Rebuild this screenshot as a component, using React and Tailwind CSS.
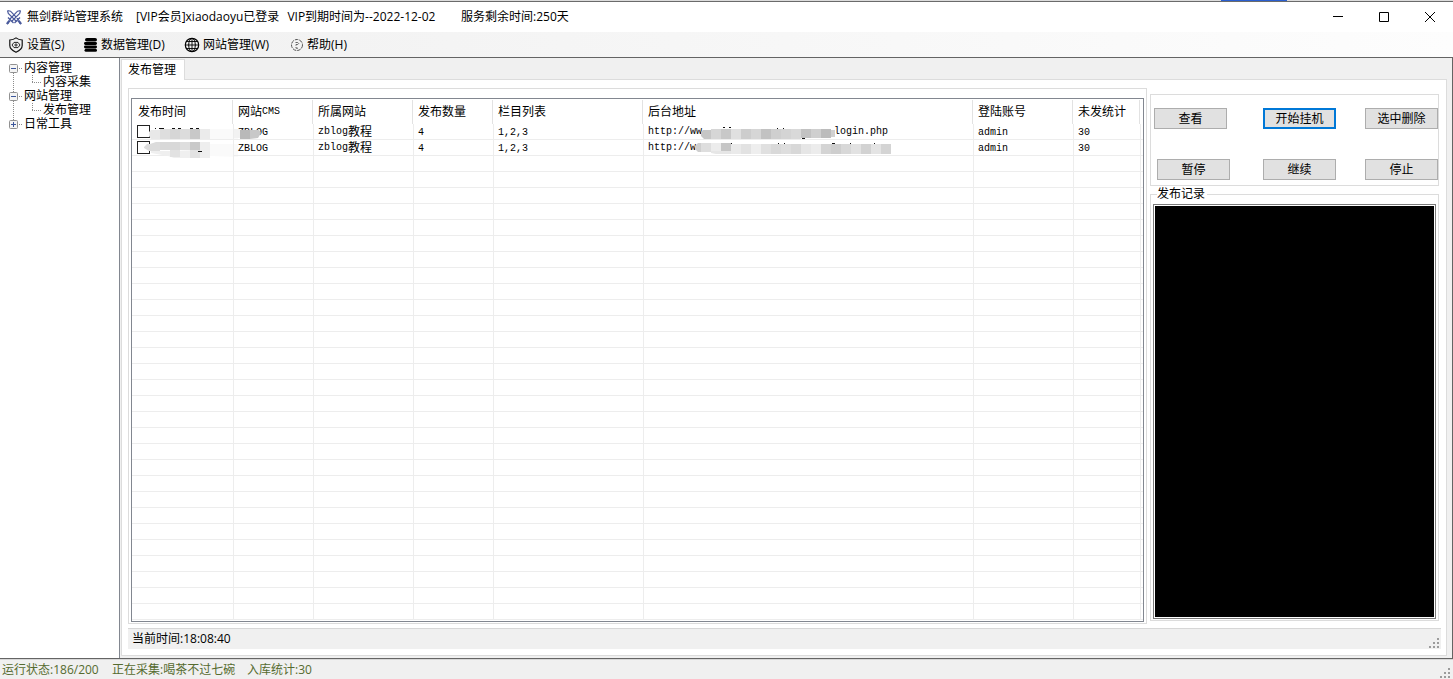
import React from 'react';

const COLUMNS = [
  { label: ['发布时间'], width: 'w-[101px]' },
  { label: ['网站', 'CMS'], width: 'w-[80px]' },
  { label: ['所属网站'], width: 'w-[100px]' },
  { label: ['发布数量'], width: 'w-[80px]' },
  { label: ['栏目列表'], width: 'w-[150px]' },
  { label: ['后台地址'], width: 'w-[330px]' },
  { label: ['登陆账号'], width: 'w-[100px]' },
  { label: ['未发统计'], width: 'w-[67px]' },
];

const EMPTY_ROWS = Array.from({ length: 29 }, (_, i) => i);

function Mono({ children }) {
  return (
    <span className="font-['Liberation_Mono','Noto_Sans_CJK_SC',monospace] text-[10px] leading-none">
      {children}
    </span>
  );
}

function Blocks({ x = 0, y, w, h, colors }) {
  return colors.map((c, i) => <rect key={i} x={x + i * w} y={y} width={w} height={h} fill={c} />);
}

function Marks({ points }) {
  return points.map(([x, y, w], i) => <rect key={i} x={x} y={y} width={w} height="1" fill="#111" />);
}

function TimeMaskA() {
  return (
    <svg className="absolute top-0 left-4 h-4 w-28" viewBox="0 0 112 16" aria-hidden="true">
      <Marks points={[[7, 4, 1], [11, 4, 5], [24, 4, 3], [30, 4, 3], [42, 4, 3], [48, 4, 3]]} />
      <path d="M1 8l2-2h9v9H3l-2-3z" fill="#e8e8e8" />
      <Blocks x={12} y={5} w={10} h={10} colors={['#dedede', '#d6d6d6', '#dcdcdc', '#c8c8c8', '#ebebeb']} />
      <rect x="62" y="5" width="28" height="10" fill="#fafafa" />
    </svg>
  );
}

function TimeMaskB() {
  return (
    <svg className="absolute top-0 left-3 h-5 w-28" viewBox="0 0 112 20" aria-hidden="true">
      <path d="M0 7l3-3h3l6-2h4v9H5l-5-3z" fill="#dcdcdc" />
      <Blocks x={16} y={2} w={10} h={8} colors={['#d8d8d8', '#d8d8d8', '#dedede', '#c9c9c9', '#eeeeee']} />
      <path d="M7 11h19l30-1h10v8H30l-6-2-17-3z" fill="#efefef" />
      <path d="M26 10h10v7H26zM46 10h10v8H46z" fill="#e2e2e2" />
      <path d="M66 4h28v13l-28-1z" fill="#fafafa" />
      <Marks points={[[54, 11, 4]]} />
    </svg>
  );
}

function CmsMask() {
  return (
    <svg className="absolute top-0 left-0 h-4 w-8" viewBox="0 0 32 16" aria-hidden="true">
      <rect x="0" y="5" width="6" height="9" fill="#f2f2f2" />
      <rect x="6" y="6" width="10" height="9" fill="#b9b9b9" />
      <path d="M16 6h9l2 3-3 5-8 1z" fill="#c8c8c8" />
    </svg>
  );
}

function UrlMaskA() {
  return (
    <svg className="absolute top-0 left-14 h-4 w-[136px]" viewBox="0 0 136 16" aria-hidden="true">
      <Marks points={[[23, 3, 2], [29, 3, 2], [77, 4, 1], [83, 4, 1]]} />
      <path d="M1 8l2-2h8v9H4l-3-3z" fill="#c6c6c6" />
      <Blocks x={11} y={5} w={10} h={10} colors={['#d6d6d6', '#c8c8c8', '#e0e0e0', '#cdcdcd', '#d6d6d6', '#c2c2c2', '#cfcfcf', '#d4d4d4', '#d9d9d9']} />
      <Blocks x={101} y={5} w={10} h={9} colors={['#c2c2c2', '#cfcfcf', '#bcbcbc']} />
      <path d="M131 6h4v7h-4z" fill="#d0d0d0" />
      <Marks points={[[102, 14, 3]]} />
    </svg>
  );
}

function UrlMaskB() {
  return (
    <svg className="absolute top-0 left-12 h-4 w-[200px]" viewBox="0 0 200 16" aria-hidden="true">
      <Marks points={[[32, 3, 2], [38, 3, 2], [86, 3, 1], [92, 3, 1], [140, 3, 3], [158, 3, 1], [182, 3, 1]]} />
      <path d="M3 6l3-3h4v9H6L3 9z" fill="#cfcfcf" />
      <Blocks x={9} y={3} w={10} h={9} colors={['#dedede', '#ececec', '#c6c6c6']} />
      <Blocks x={39} y={4} w={10} h={10} colors={['#eaeaea', '#e2e2e2', '#eeeeee', '#e0e0e0', '#d9d9d9', '#dedede', '#d8d8d8', '#e6e6e6', '#ececec', '#d4d4d4', '#cecece', '#d8d8d8', '#e2e2e2', '#d2d2d2', '#e4e4e4']} />
      <path d="M19 11h20v3H24l-5-1z" fill="#e6e6e6" />
      <rect x="189" y="4" width="10" height="10" fill="#d4d4d4" />
    </svg>
  );
}

const ROWS = [
  { name: '第一条', cms: 'ZBLOG', url: ['http://ww', 'login.php'], TimeMask: TimeMaskA, CmsCover: CmsMask, UrlMask: UrlMaskA },
  { name: '第二条', cms: 'ZBLOG', url: ['http://w'], TimeMask: TimeMaskB, UrlMask: UrlMaskB },
];

const CELL = 'relative h-4 border-b border-b-[#ededed] p-0 pl-1 align-middle leading-none whitespace-nowrap border-l border-l-[#ededed]';

function TaskTable() {
  return (
    <table className="w-full table-fixed border-separate border-spacing-0 text-xs">
      <thead>
        <tr>
          {COLUMNS.map((c, i) => (
            <th key={c.label[0]} scope="col" className={`${c.width} h-[25px] p-0 pt-px text-left font-normal`}>
              <div className={`flex h-6 items-center border-r border-[#e2e2e2] leading-none ${i ? 'pl-[5px]' : 'pl-[6px]'}`}>
                {c.label[0]}
                {c.label[1] && <Mono>{c.label[1]}</Mono>}
              </div>
            </th>
          ))}
          <td className="p-0" />
        </tr>
      </thead>
      <tbody>
        {ROWS.map(({ name, cms, url, TimeMask, CmsCover, UrlMask }) => (
          <tr key={name}>
            <td className="relative h-4 border-b border-[#ededed] p-0 pl-[5px] align-middle">
              <input
                type="checkbox"
                aria-label={name}
                className="block size-[13px] appearance-none border border-[#222] bg-white checked:bg-[#222]"
              />
              <TimeMask />
            </td>
            <td className={CELL}>
              <Mono>{cms}</Mono>
              {CmsCover && <CmsCover />}
            </td>
            <td className={CELL}>
              <div className="flex h-[15px] items-center">
                <Mono>zblog</Mono>教程
              </div>
            </td>
            <td className={CELL}><Mono>4</Mono></td>
            <td className={CELL}><Mono>1,2,3</Mono></td>
            <td className={CELL}>
              <div className="flex h-[15px] w-60 items-center justify-between">
                {url.map((part) => <Mono key={part}>{part}</Mono>)}
              </div>
              <UrlMask />
            </td>
            <td className={CELL}><Mono>admin</Mono></td>
            <td className={CELL}><Mono>30</Mono></td>
            <td className={CELL} />
          </tr>
        ))}
        {EMPTY_ROWS.map((r) => (
          <tr key={r}>
            <td className="h-4 border-b border-[#ededed] p-0" />
            {COLUMNS.map((c) => <td key={c.label[0]} className={CELL} />)}
          </tr>
        ))}
      </tbody>
    </table>
  );
}

function Grip() {
  return (
    <svg className="size-[11px] shrink-0" viewBox="0 0 11 11" aria-hidden="true">
      {[[8, 0], [4, 4], [8, 4], [0, 8], [4, 8], [8, 8]].map(([x, y]) => (
        <rect key={`${x}-${y}`} x={x} y={y} width="2" height="2" fill="#9c9c9c" />
      ))}
    </svg>
  );
}

function SwordsIcon() {
  return (
    <svg className="size-4" viewBox="0 0 16 16" fill="none" stroke="#4a5a9c" aria-hidden="true">
      <path d="M1.5 1.5l3 .7 8 8.3M1.5 1.5l.8 3 8.2 8M14.5 1.5l-3 .7-8 8.3M14.5 1.5l-.8 3-8.2 8" strokeWidth="1.2" />
      <path d="M2 8.5L7.5 14M14 8.5L8.5 14" strokeWidth="1.3" />
      <path d="M3.8 11.5L1.5 14M12.2 11.5l2.3 2.5" strokeWidth="2.2" />
      <circle cx="1.5" cy="14.3" r=".8" fill="#4a5a9c" />
      <circle cx="14.5" cy="14.3" r=".8" fill="#4a5a9c" />
    </svg>
  );
}

function ShieldIcon() {
  return (
    <svg className="size-4" viewBox="0 0 16 16" fill="none" stroke="#111" aria-hidden="true">
      <path d="M8 .9C6.2 2.3 4 2.9 1.8 3v5.5c0 3 2.7 5.2 6.2 6.8 3.5-1.6 6.2-3.8 6.2-6.8V3C12 2.9 9.8 2.300 8 .9z" strokeWidth="1.2" />
      <path d="M4 8l2-2.6h4L12 8l-2 2.6H6z" strokeWidth=".9" />
      <circle cx="8" cy="8" r="1.1" strokeWidth=".9" />
    </svg>
  );
}

function DatabaseIcon() {
  return (
    <svg className="h-4 w-[15px]" viewBox="0 0 15 16" aria-hidden="true">
      <rect x="2" y="1" width="12" height="3.6" rx="1.8" fill="#000" />
      <rect x="1" y="5" width="13" height="3" rx="1.4" fill="#000" />
      <rect x="1" y="8.4" width="13" height="3" rx="1.4" fill="#000" />
      <rect x="1.500" y="11.800" width="12.500" height="3" rx="1.500" fill="#000" />
    </svg>
  );
}

function GlobeIcon() {
  return (
    <svg className="size-4" viewBox="0 0 16 16" fill="none" stroke="#000" aria-hidden="true">
      <circle cx="8" cy="8" r="6.7" strokeWidth="1.2" />
      <ellipse cx="8" cy="8" rx="3.3" ry="6.7" />
      <path d="M8 1v14M1 8h14M2.5 4.5h11M2.5 11.5h11" strokeWidth=".9" />
    </svg>
  );
}

function HelpIcon() {
  return (
    <svg className="size-[14px]" viewBox="0 0 14 14" fill="none" stroke="#555" aria-hidden="true">
      <circle cx="7" cy="7" r="5.5" strokeDasharray="3.6 1" />
      <path d="M5.5 4.5h2.2l1 1-1 1H6v1.200M6 9v1.200h2" strokeWidth=".9" />
    </svg>
  );
}

const MENU = [
  { label: '设置(S)', Icon: ShieldIcon, cls: 'w-[75px]' },
  { label: '数据管理(D)', Icon: DatabaseIcon, cls: 'w-[101px]' },
  { label: '网站管理(W)', Icon: GlobeIcon, cls: 'w-[106px]' },
  { label: '帮助(H)', Icon: HelpIcon, cls: 'w-[70px]' },
];

const DOTS = { stroke: '#8c8c8c', strokeDasharray: '1 1' };

function TreeParent({ label, open, first, last }) {
  return (
    <button type="button" aria-expanded={open} className="flex h-[14px] items-center text-left leading-none">
      <svg className="h-[14px] w-6" viewBox="0 0 24 14" aria-hidden="true">
        {!first && <path d="M13.5 0v3" {...DOTS} />}
        {!last && <path d="M13.5 12v2" {...DOTS} />}
        <rect x="9.5" y="3.5" width="8" height="8" rx="1" fill="#f4f4f4" stroke="#919191" />
        <path d={open ? 'M11 7.5h5' : 'M11 7.5h5M13.5 5v5'} stroke="#3b569b" />
        <path d="M19 7.5h3" {...DOTS} />
      </svg>
      {label}
    </button>
  );
}

function TreeChild({ label }) {
  return (
    <li>
      <a href="#item" className="flex h-[14px] items-center leading-none">
        <svg className="h-[14px] w-[43px]" viewBox="0 0 43 14" fill="none" aria-hidden="true">
          <path d="M13.5 0v14" {...DOTS} />
          <path d="M32.5 0v7M32 7.5h9" {...DOTS} />
        </svg>
        {label}
      </a>
    </li>
  );
}

function PushButton({ children, className = '' }) {
  return (
    <button type="button" className={`h-[21px] w-[73px] border bg-[#e1e1e1] leading-none ${className || 'border-[#adadad]'}`}>
      {children}
    </button>
  );
}

export default function App() {
  return (
    <div className="flex min-h-screen flex-col bg-[#f0f0f0] font-['Liberation_Sans','Noto_Sans_CJK_SC',sans-serif] text-xs text-black">
      <div className="flex h-[2px] justify-end border-b border-[#6b6b6b] bg-[#dcdcdc] pr-[166px]">
        <div className="w-[66px] bg-[#2a5fd0]" />
      </div>

      <header className="flex h-[30px] items-center bg-white pl-[6px] font-['Open_Sans','Noto_Sans_CJK_SC',sans-serif]">
        <SwordsIcon />
        <h1 className="w-[114px] pl-[5px] whitespace-nowrap">無剑群站管理系统</h1>
        <p className="flex w-[325px] gap-2 whitespace-nowrap">
          <span>[VIP会员]xiaodaoyu已登录</span>
          <span>VIP到期时间为--2022-12-02</span>
        </p>
        <p className="whitespace-nowrap">服务剩余时间:250天</p>
        <div className="ml-auto flex">
          <button type="button" aria-label="最小化" className="flex h-[30px] w-[46px] items-center justify-center">
            <svg className="size-[10px]" viewBox="0 0 10 10" stroke="#000"><path d="M0 4.5h10" /></svg>
          </button>
          <button type="button" aria-label="最大化" className="flex h-[30px] w-[46px] items-center justify-center">
            <svg className="size-[10px]" viewBox="0 0 10 10" stroke="#000" fill="none"><path d="M.5.5h9v9h-9z" /></svg>
          </button>
          <button type="button" aria-label="关闭" className="flex h-[30px] w-[46px] items-center justify-center">
            <svg className="size-[10px]" viewBox="0 0 10 10" stroke="#000"><path d="M0 0l10 10M10 0L0 10" /></svg>
          </button>
        </div>
      </header>

      <nav className="flex h-[26px] items-center border-b border-[#646464] bg-linear-to-r from-[#f0f0f0] to-[#fdfdfd] pl-2 font-['Open_Sans','Noto_Sans_CJK_SC',sans-serif]">
        {MENU.map(({ label, Icon, cls }) => (
          <button key={label} type="button" className={`flex items-center gap-[3px] whitespace-nowrap ${cls}`}>
            <Icon />
            {label}
          </button>
        ))}
      </nav>

      <div className="flex flex-1 border-r border-b border-[#646464]">
        <aside className="w-[120px] shrink-0 border-r border-[#828790] bg-white pt-[3px]">
          <ul>
            <li>
              <TreeParent label="内容管理" open first />
              <ul><TreeChild label="内容采集" /></ul>
            </li>
            <li>
              <TreeParent label="网站管理" open />
              <ul><TreeChild label="发布管理" /></ul>
            </li>
            <li>
              <TreeParent label="日常工具" open={false} last />
            </li>
          </ul>
        </aside>

        <main className="flex min-w-0 flex-1 flex-col pt-px pr-[5px] pb-[2px] pl-px">
          <div role="tablist" className="flex">
            <button
              type="button"
              role="tab"
              aria-selected="true"
              className="z-10 -mb-px h-[21px] w-16 border border-b-0 border-[#dcdcdc] bg-white pr-[2px] leading-none"
            >
              发布管理
            </button>
          </div>

          <div className="flex flex-1 flex-col border border-[#dcdcdc] bg-white pt-2 pr-[5px] pb-[6px] pl-[6px]">
            <div className="flex gap-[3px] pr-[2px]">
              <section className="min-w-0 flex-1 border border-[#dcdcdc] px-[2px] pt-[9px] pb-px">
                <div className="border border-[#828790] pb-px">
                  <TaskTable />
                </div>
              </section>

              <div className="flex w-[289px] shrink-0 flex-col pt-[6px] pb-[3px]">
                <section className="grid grid-cols-[109px_102px_73px] gap-y-[30px] border border-[#dcdcdc] pt-[13px] pb-[5px] pl-[3px]">
                  <PushButton>查看</PushButton>
                  <PushButton className="border-2 border-[#0078d7]">开始挂机</PushButton>
                  <PushButton>选中删除</PushButton>
                  <PushButton className="ml-[3px] border-[#adadad]">暂停</PushButton>
                  <PushButton>继续</PushButton>
                  <PushButton>停止</PushButton>
                </section>

                <fieldset className="mt-[2px] flex flex-1 flex-col border border-[#dcdcdc] px-[2px] pt-1 pb-px">
                  <legend className="ml-1 pr-[2px] leading-[12px]">
                    <label htmlFor="log">发布记录</label>
                  </legend>
                  <div className="flex flex-1 border border-[#7a7a7a] bg-white p-px">
                    <textarea id="log" readOnly className="block w-full resize-none bg-black text-white outline-none" />
                  </div>
                </fieldset>
              </div>
            </div>

            <div className="mt-1 flex h-[21px] items-center justify-between border-t border-[#d7d7d7] bg-[#f0f0f0] pr-px pl-1 font-['Open_Sans','Noto_Sans_CJK_SC',sans-serif]">
              <p>当前时间:18:08:40</p>
              <div className="self-end"><Grip /></div>
            </div>
          </div>
        </main>
      </div>

      <footer className="flex h-5 items-center border-t border-[#d7d7d7] pr-[2px] pl-[2px] font-['Open_Sans','Noto_Sans_CJK_SC',sans-serif] text-[#556b2f]">
        <p className="w-[110px] whitespace-nowrap">运行状态:186/200</p>
        <p className="w-[135px] whitespace-nowrap">正在采集:喝茶不过七碗</p>
        <p className="whitespace-nowrap">入库统计:30</p>
        <div className="ml-auto self-end"><Grip /></div>
      </footer>
    </div>
  );
}
